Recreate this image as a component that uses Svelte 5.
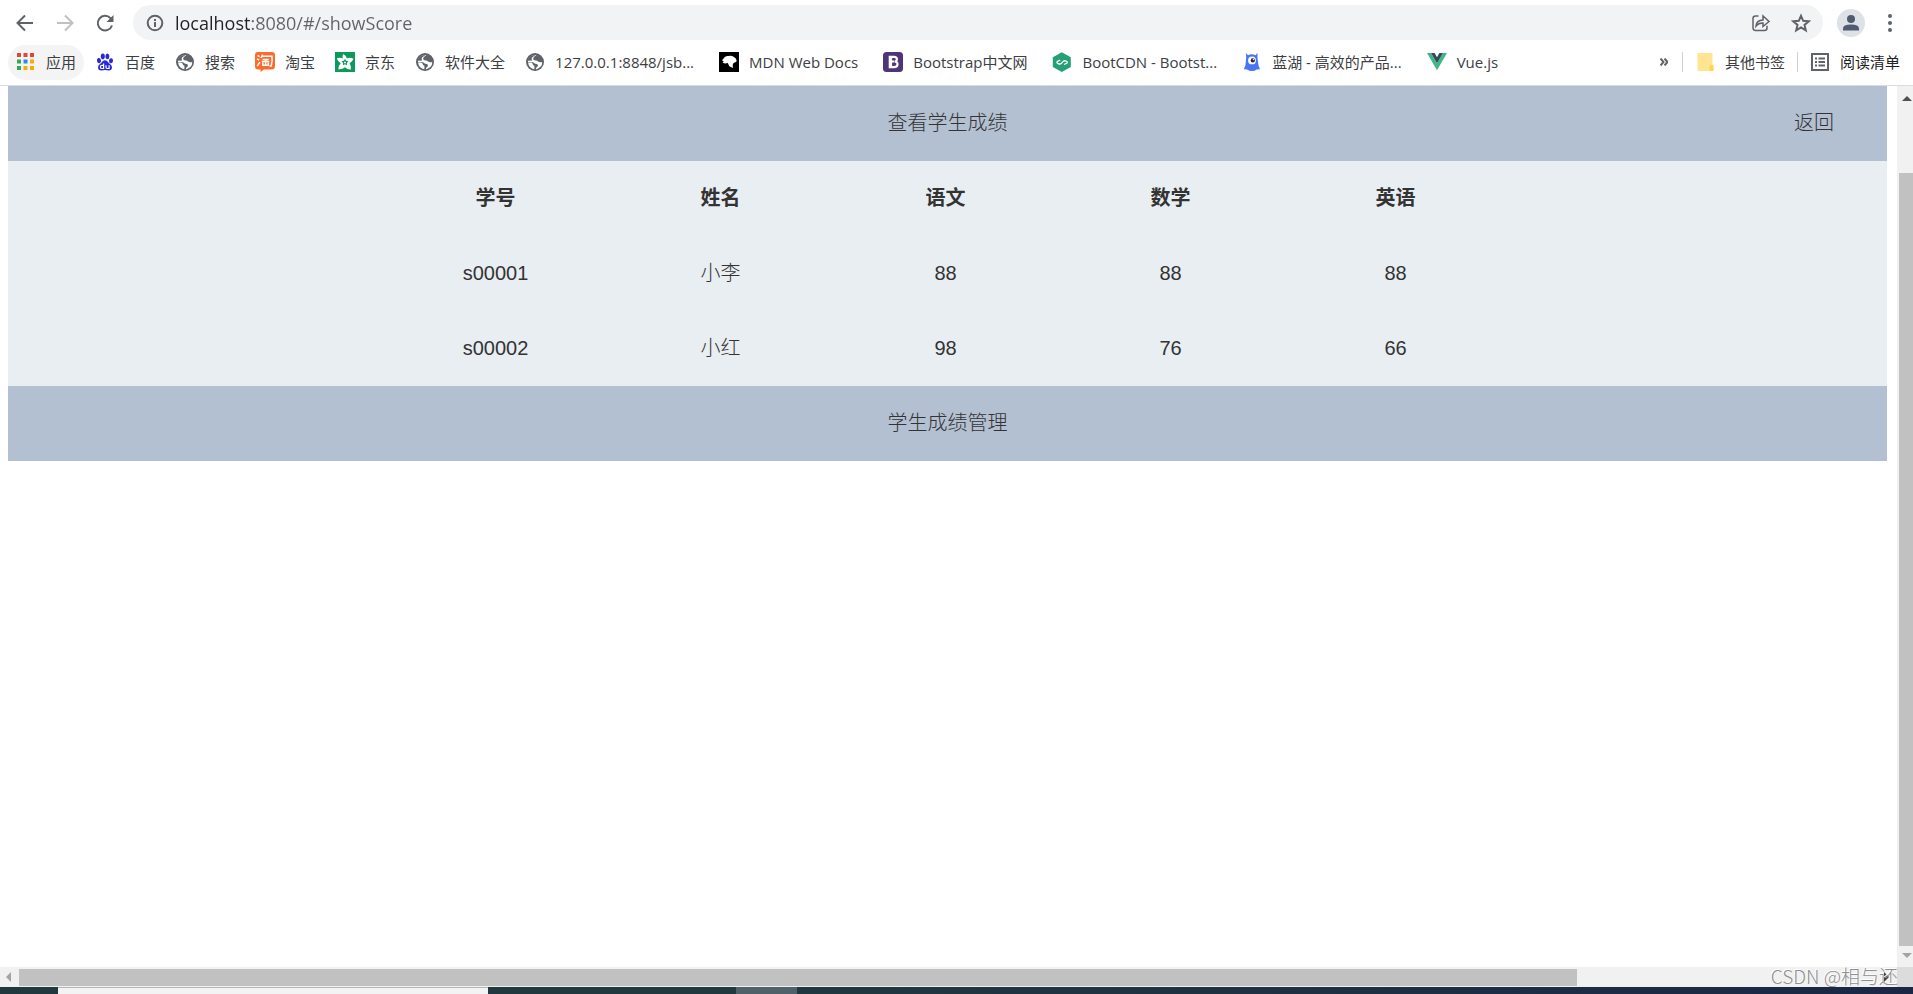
<script lang="ts">
	type Bookmark = { icon: string; label: string };

	let address = $state('localhost:8080/#/showScore');

	const bookmarks: Bookmark[] = [
		{ icon: 'baidu', label: '百度' },
		{ icon: 'globe', label: '搜索' },
		{ icon: 'taobao', label: '淘宝' },
		{ icon: 'jd', label: '京东' },
		{ icon: 'globe', label: '软件大全' },
		{ icon: 'globe', label: '127.0.0.1:8848/jsb...' },
		{ icon: 'mdn', label: 'MDN Web Docs' },
		{ icon: 'bootstrap', label: 'Bootstrap中文网' },
		{ icon: 'bootcdn', label: 'BootCDN - Bootst...' },
		{ icon: 'lanhu', label: '蓝湖 - 高效的产品...' },
		{ icon: 'vue', label: 'Vue.js' }
	];

	const appColors = ['#ea4335', '#ea4335', '#ea4335', '#34a853', '#1a8cff', '#fbaa05', '#34a853', '#fbaa05', '#fbaa05'];

	const columns = ['学号', '姓名', '语文', '数学', '英语'];

	const students = [
		{ id: 's00001', name: '小李', chinese: 88, math: 88, english: 88 },
		{ id: 's00002', name: '小红', chinese: 98, math: 76, english: 66 }
	];
</script>

{#snippet favicon(name: string)}
	<svg class="icon" viewBox="0 0 20 20" aria-hidden="true">
		{#if name === 'baidu'}
			<g fill="#2529d8">
				<ellipse cx="4" cy="8.6" rx="2" ry="2.6" transform="rotate(-12 4 8.6)" />
				<ellipse cx="7.8" cy="4.4" rx="2" ry="2.8" />
				<ellipse cx="12.4" cy="4.4" rx="2" ry="2.8" transform="rotate(8 12.4 4.4)" />
				<ellipse cx="16" cy="8.8" rx="2" ry="2.5" transform="rotate(8 16 8.8)" />
				<path d="M10 8.2c1.6 0 2.6 1.2 3.4 2.4 1 1.3 3.6 2.5 3.6 4.9 0 2-1.4 3-3.2 3-1.4 0-2.4-.4-3.8-.4s-2.4.4-3.8.4c-1.8 0-3.2-1-3.2-3 0-2.4 2.600-3.600 3.600-4.900.8-1.200 1.800-2.400 3.400-2.400z" />
			</g>
			<path d="M8.600 11.500v5H6.900q-1.500 0-1.500-1.600t1.500-1.600h1.700M11 13.300v2q0 1.200 1.200 1.200h1.900v-3.200" fill="none" stroke="#fff" stroke-width="1.200" />
		{:else if name === 'globe'}
			<circle cx="10" cy="10" r="9" fill="#5f6368" />
			<path d="M11.500 3.200Q9 4.200 8.200 6q-.4 1.700 1.300 2.200 3.200 0 4 1.600 1.500.8 3.700.2.200 4.500-4.200 6.500-.8.500-2 .7-.4-1.300.8-1.900 1.700-1.200 1-2.600-.8-1.200-2.800-1-1.300-1.700-3.200-1.700H2.900Q3.100 5.800 6.800 3.700 9 2.600 11.500 3.200z" fill="#fff" />
			<path d="M2.600 8.800Q3.600 4.600 7.800 3.200L10.500 3 7 5.500q-1 1.500.2 3z" fill="#5f6368" />
			<path d="M3 10.500h3.600q1 .4 1.200 1.800.2 1.300 1.600 1.500v3.400Q4 16.700 3 10.500z" fill="#fff" />
		{:else if name === 'taobao'}
			<path d="M3 0h14q3 0 3 3v11q0 3.500-3.500 3.500H9L5.600 20v-2.500H3q-3 0-3-3V3q0-3 3-3z" fill="#ff6a2b" />
			<path d="M2.500 3.300l2 1.300M2 6.800l2.200 1.300M2.300 14.200l2.500-4M7.600 2.500L6 6M7 4.300h10q.6 5.200-.8 9.700h-1.700M7.700 7.400h6M6.800 9.600h7.500M10.600 7.400v5.500M7.800 10.600v2.600h5.500v-2.600" fill="none" stroke="#fff" stroke-width="1.500" />
		{:else if name === 'jd'}
			<path d="M0 0h20v20H0z" fill="#0b9a5b" />
			<path d="M8.200 2q2.800 1.200 3.700 4.300 3.300-1.200 6.600.5-1 3-3.900 4.500 1.800 2.800 1.300 6.300-3.600.2-5.900-2.400-2.800 2.500-6.600 2-.2-3.500 2.300-5.900Q2.500 9.100 1.800 6.200q3-1.100 5.800.2Q7.200 4 8.200 2z" fill="#fff" />
			<path d="M10 6.800l1.100 2 2.300.5-1.500 1.700.2 2.300-2.100-1-2.100 1 .2-2.300-1.500-1.700 2.300-.5z" fill="#0b9a5b" />
			<circle cx="10" cy="10.400" r="1" fill="#fff" />
		{:else if name === 'mdn'}
			<path d="M0 0h20v20H0z" fill="#000" />
			<path d="M3 8.200q1.300-1 2.300-2.700Q6.700 3.500 9.500 4q3-.8 5 .8 2.700 1 3.200 4-.4 1.600-2.200 1.700-1.800.8-1.800 2.600l.2 2.900-3.600-1.800-1.500-3.100-2.600.5-2.700-.8 1.400-1z" fill="#fff" />
		{:else if name === 'bootstrap'}
			<rect width="20" height="20" rx="3.500" fill="#4f3578" />
			<path d="M6.800 4.900h4.100q3 0 3 2.400 0 1.800-1.600 2.300 2.200.4 2.200 2.700 0 2.900-3.500 2.900H6.800zM8 9.500h3.500M8 5v10" fill="none" stroke="#fff" stroke-width="2.200" />
		{:else if name === 'bootcdn'}
			<path d="M9.800.2l9 5v9.700l-9 5-9-5V5.200z" fill="#25a074" />
			<path d="M8.300 8L5.600 9.300q-1.500 1 0 2l1 .5q1.400.6 2.800-.4l1.700-2q1.300-1 2.700-.4l1 .6q1 .9-.1 1.700L12 12.500" fill="none" stroke="#fff" stroke-width="1.300" />
		{:else if name === 'lanhu'}
			<path d="M4 1l2 2.200Q9.700 1.300 13.400 3.200L15.500 1v5.300l1 7.200 1.500 3.700-3.200.2Q12.600 19 9.900 19t-4.800-1.600l-3.300-.2 1.600-3.700L4.200 6z" fill="#4775f5" />
			<circle cx="10" cy="8.400" r="3.900" fill="#fff" />
			<circle cx="10.800" cy="8.400" r="2.100" fill="#24283e" />
			<circle cx="11.400" cy="7.600" r=".7" fill="#fff" />
		{:else if name === 'vue'}
			<path d="M0 1h4l6 10.300L16 1h4L10 18.300z" fill="#41b883" />
			<path d="M4 1h3.600L10 5.200 12.400 1H16l-6 10.300z" fill="#34495e" />
		{/if}
	</svg>
{/snippet}

<div class="browser">
	<header class="toolbar">
		<div class="nav-buttons">
			<button aria-label="Back">
				<svg class="icon" viewBox="0 0 20 20"><path d="M18 10H3M10 2.500L2.500 10l7.500 7.500" /></svg>
			</button>
			<button class="disabled" aria-label="Forward" disabled>
				<svg class="icon" viewBox="0 0 20 20"><path d="M2 10h15M10 2.500l7.500 7.500-7.500 7.500" /></svg>
			</button>
			<button aria-label="Reload">
				<svg class="icon" viewBox="0 0 20 20">
					<path d="M17 12.500A7.300 7.300 0 1 1 15.500 5.200L17 7" />
					<path d="M18.500 2v7h-7z" class="solid" />
				</svg>
			</button>
		</div>
		<div class="omnibox">
			<svg class="icon info" viewBox="0 0 20 20" aria-hidden="true">
				<circle cx="10" cy="10" r="7.300" />
				<path d="M10 9v5M10 6v2" />
			</svg>
			<div class="address">
				<input aria-label="Address" bind:value={address} spellcheck="false" />
			</div>
			<button aria-label="Share">
				<svg class="icon thin" viewBox="0 0 20 20">
					<path d="M7.500 3H4.500Q2 3 2 5.500v9Q2 17.500 4.500 17.500h9q2.500 0 2.500-2.500v-2.200" />
					<path d="M5 13q.5-5.800 7-6V3l6 5.500-6 5v-3.600Q7.500 9.700 5 13z" />
				</svg>
			</button>
			<button aria-label="Bookmark this page">
				<svg class="icon" viewBox="0 0 20 20">
					<path d="M10 2.800l2.200 5 5.500.5-4.200 3.600 1.300 5.400-4.800-2.900-4.800 2.900 1.300-5.400-4.200-3.600 5.500-.5z" />
				</svg>
			</button>
		</div>
		<button class="avatar" aria-label="Profile">
			<svg viewBox="0 0 28 28" width="28" height="28">
				<circle cx="14" cy="14" r="14" fill="#dee1e6" />
				<circle cx="14" cy="10" r="4" fill="#4f5b70" />
				<path d="M6 21.500v-2q0-4 8-4t8 4v2z" fill="#4f5b70" />
			</svg>
		</button>
		<button class="menu" aria-label="Menu">
			<svg viewBox="0 0 4 20" width="4" height="20">
				<g fill="#5f6368">
					<circle cx="2" cy="3" r="2" />
					<circle cx="2" cy="10" r="2" />
					<circle cx="2" cy="17" r="2" />
				</g>
			</svg>
		</button>
	</header>

	<nav class="bookmarks">
		<a class="bookmark apps" href="#/apps">
			<svg class="icon" viewBox="0 0 20 20" aria-hidden="true">
				{#each appColors as color, i}
					<rect x={1 + (i % 3) * 6.500} y={1 + Math.floor(i / 3) * 6.500} width="4" height="4" fill={color} />
				{/each}
			</svg>
			<span>应用</span>
		</a>
		{#each bookmarks as item}
			<a class="bookmark" class:wide={item.label.length > 4} href="#/bookmark">
				{@render favicon(item.icon)}
				<span>{item.label}</span>
			</a>
		{/each}
		<div class="bookmark-tail">
			<button class="more" aria-label="More bookmarks">
				<svg viewBox="0 0 8 8" width="8" height="8"><path d="M.5.500L3.500 4l-3 3.500M4.500.500l3 3.500-3 3.500" /></svg>
			</button>
			<a class="bookmark divided" href="#/other">
				<svg class="icon" viewBox="0 0 20 20" aria-hidden="true">
					<path d="M3.500 1h13q1 0 1 1v11l1 1v4q0 1-1 1h-14q-1 0-1-1V2q0-1 1-1z" fill="#ffe591" />
					<path d="M14.500 19v-4q0-1.500 1.500-2l1.500-.3 1 1.300v4q0 1-1 1z" fill="#fdd64f" />
				</svg>
				<span>其他书签</span>
			</a>
			<a class="bookmark divided reading" href="#/reading">
				<svg class="icon" viewBox="0 0 20 20" aria-hidden="true">
					<path d="M2 2h16v16H2zM5 6.500h2M5 10h2M5 13.500h2M8.500 6.500H15M8.500 10H15M8.500 13.500H15" fill="none" stroke="#5f6368" stroke-width="2" />
				</svg>
				<span>阅读清单</span>
			</a>
		</div>
	</nav>

	<div class="viewport">
		<main>
			<div class="bar top">
				<span></span>
				<span>查看学生成绩</span>
				<a href="#/">返回</a>
			</div>
			<div class="scores">
				<table>
					<thead>
						<tr>
							{#each columns as column}
								<th>{column}</th>
							{/each}
						</tr>
					</thead>
					<tbody>
						{#each students as student}
							<tr>
								<td>{student.id}</td>
								<td>{student.name}</td>
								<td>{student.chinese}</td>
								<td>{student.math}</td>
								<td>{student.english}</td>
							</tr>
						{/each}
					</tbody>
				</table>
			</div>
			<footer class="bar">学生成绩管理</footer>
		</main>
		<div class="scroll-y" aria-hidden="true">
			<i class="arrow up"></i>
			<div class="track">
				<div class="thumb"></div>
			</div>
			<i class="arrow down"></i>
		</div>
	</div>

	<div class="scroll-x" aria-hidden="true">
		<i class="arrow left"></i>
		<div class="track">
			<div class="thumb"></div>
		</div>
		<i class="arrow right"></i>
		<div class="corner"></div>
	</div>
	<div class="taskbar" aria-hidden="true">
		<div class="window"></div>
		<div class="task"></div>
	</div>
	<div class="watermark">CSDN @相与还</div>
</div>

<style>
	:global(body) {
		margin: 0;
	}

	.browser {
		position: relative;
		display: flex;
		flex-direction: column;
		height: 100vh;
		overflow: hidden;
		background: #fff;
		color: #3c4043;
		font-family: 'Open Sans', 'Noto Sans CJK SC', sans-serif;
	}

	button {
		display: flex;
		padding: 0;
		border: 0;
		background: none;
		cursor: pointer;
	}

	a {
		color: inherit;
		text-decoration: none;
	}

	.icon {
		flex: none;
		width: 20px;
		height: 20px;
	}

	.toolbar {
		display: flex;
		align-items: center;
		height: 35px;
		padding: 5px 21px 4px 15px;
	}

	.toolbar .icon {
		fill: none;
		stroke: #5f6368;
		stroke-width: 2;
	}

	.toolbar .icon.thin {
		stroke-width: 1.5;
	}

	.toolbar .icon .solid {
		fill: #5f6368;
		stroke: none;
	}

	.nav-buttons {
		display: flex;
		gap: 20px;
		margin-right: 18px;
	}

	.nav-buttons .disabled {
		opacity: 0.4;
	}

	.omnibox {
		flex: 1;
		display: flex;
		align-items: center;
		gap: 20px;
		height: 35px;
		padding: 0 12px;
		border-radius: 18px;
		background: #f1f3f4;
	}

	.address {
		flex: 1;
		margin-left: -10px;
	}

	/* host name is darker than the port and path */
	.address input {
		display: block;
		width: 100%;
		padding: 0;
		border: 0;
		outline: 0;
		background: linear-gradient(90deg, #202124 77px, #5f6368 77px);
		background-clip: text;
		color: #5f6368;
		font: 18px/24px 'Open Sans', sans-serif;
		-webkit-text-fill-color: transparent;
	}

	.avatar {
		margin: 0 23px 0 14px;
	}

	.bookmarks {
		display: flex;
		align-items: center;
		gap: 20px;
		height: 36px;
		padding: 0 13px 5px 8px;
		border-bottom: 1px solid #dadce0;
		font-size: 15px;
		line-height: 20px;
		white-space: nowrap;
	}

	.bookmark {
		display: flex;
		align-items: center;
		gap: 10px;
	}

	.wide {
		padding-right: 5px;
	}

	.apps {
		height: 35px;
		margin-right: -9px;
		padding: 0 8px;
		border-radius: 18px;
		background: #f4f4f4;
	}

	.bookmark-tail {
		display: flex;
		align-items: center;
		gap: 12px;
		margin-left: auto;
	}

	.more {
		margin-right: 2px;
	}

	.more path {
		fill: none;
		stroke: #5f6368;
		stroke-width: 2;
	}

	.divided {
		padding-left: 12px;
		border-left: 1px solid #cfd1d4;
	}

	.reading {
		color: #202124;
	}

	.viewport {
		flex: 1;
		display: flex;
		min-height: 0;
	}

	main {
		flex: 1;
		padding: 0 10px 0 8px;
		color: #333;
		font: 300 20px/75px 'Liberation Sans', 'Noto Sans CJK SC', sans-serif;
		text-align: center;
	}

	.bar {
		height: 75px;
		background: #b3c0d1;
	}

	.top {
		display: grid;
		grid-template-columns: 1fr auto 1fr;
	}

	.top a {
		justify-self: end;
		padding-right: 53px;
	}

	.scores {
		padding-right: 4px;
		background: #e9eef3;
	}

	table {
		width: 60%;
		margin: 0 auto;
		border-collapse: collapse;
		table-layout: fixed;
	}

	th,
	td {
		height: 75px;
		padding: 0;
	}

	.scroll-y {
		display: flex;
		flex-direction: column;
		align-items: center;
		width: 16px;
		background: #f1f1f1;
	}

	.scroll-y .track {
		flex: 1;
		align-self: stretch;
		display: flex;
		align-items: flex-end;
		padding-left: 2px;
	}

	.scroll-y .thumb {
		width: 100%;
		height: 92%;
		background: #c1c1c1;
	}

	.arrow {
		flex: none;
		box-sizing: border-box;
		border: 5px solid transparent;
	}

	.up {
		margin: 5px 0 5px 4px;
		border-bottom-color: #505050;
	}

	.down {
		margin: 7px 0 4px 4px;
		border-top-color: #a3a3a3;
	}

	.scroll-x {
		display: flex;
		align-items: center;
		height: 20px;
		background: #f1f1f1;
	}

	.scroll-x .track {
		flex: 1;
	}

	.scroll-x .thumb {
		width: 84%;
		height: 17px;
		background: #c1c1c1;
	}

	.left {
		margin: 0 8px 0 1px;
		border-right-color: #a3a3a3;
	}

	.right {
		margin: 0 3px 0 10px;
		border-left-color: #404040;
	}

	.corner {
		width: 16px;
		height: 20px;
		background: #dcdcdc;
	}

	.taskbar {
		display: flex;
		gap: 248px;
		height: 7px;
		padding-left: 58px;
		background: linear-gradient(90deg, #21383f 40%, #1b2745);
	}

	.window {
		width: 430px;
		background: #f3f3f3;
		border-top: 1px solid #b5b5b5;
	}

	.task {
		width: 61px;
		background: #50616a;
	}

	.watermark {
		position: absolute;
		right: 15px;
		bottom: 6px;
		color: #8f8f8f;
		font: 300 19px/24px 'Noto Sans CJK SC', sans-serif;
		text-shadow: -1px -1px 0 #fff;
	}
</style>
